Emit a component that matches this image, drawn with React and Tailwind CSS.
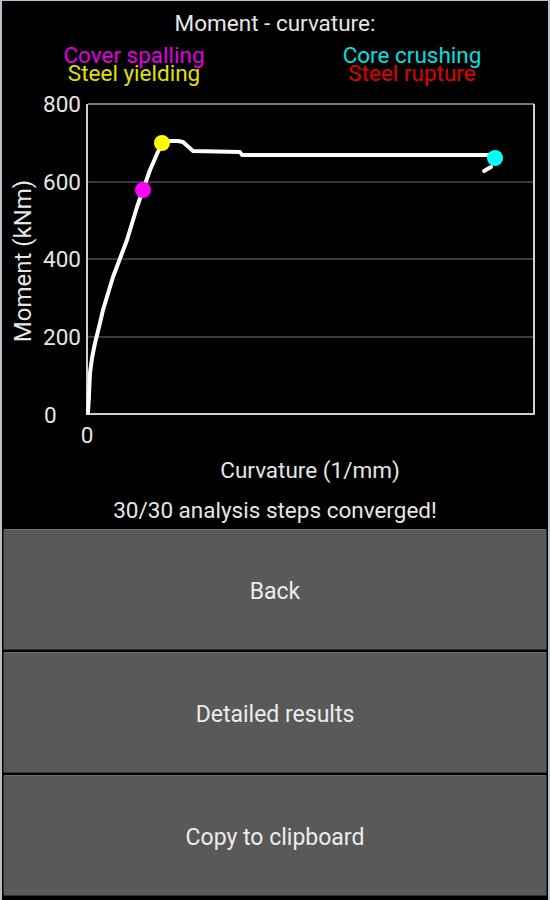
import React from "react";

const curve = [
  [88, 413], [89, 395], [90, 373], [92, 358], [95, 343], [100, 323], [103, 310],
  [113, 277], [127, 240], [137, 207], [143, 190], [150, 170], [157, 154], [162, 143],
  [170, 141], [178, 141], [183, 142], [193, 151], [240, 152], [242, 155], [490, 155],
];

const pts = curve.map(([x, y]) => `${x},${y}`).join(" ");

const Chart = () => (
  <svg width="546" height="369" viewBox="2 88 546 369" className="block">
    {/* grid */}
    {[182, 259, 337].map((y) => (
      <line key={y} x1="88" x2="533" y1={y} y2={y} stroke="#3a3a3a" strokeWidth="2" />
    ))}
    <line x1="88" x2="534" y1="104" y2="104" stroke="#777" strokeWidth="2" />
    <line x1="87" x2="87" y1="104" y2="415" stroke="#d0d0d0" strokeWidth="2" />
    <line x1="87" x2="535" y1="414" y2="414" stroke="#d0d0d0" strokeWidth="2" />
    <line x1="534" x2="534" y1="104" y2="415" stroke="#d0d0d0" strokeWidth="2" />

    {/* tick labels */}
    <g fill="#e6e6e6" fontSize="22.5" fontFamily="Roboto, sans-serif">
      <text x="43" y="112">800</text>
      <text x="43" y="190">600</text>
      <text x="43" y="267">400</text>
      <text x="43" y="345">200</text>
      <text x="44" y="423">0</text>
      <text x="87" y="443" textAnchor="middle">0</text>
      <text
        x="23"
        y="261"
        textAnchor="middle"
        dominantBaseline="central"
        fontSize="24"
        transform="rotate(-90 23 261)"
      >
        Moment (kNm)
      </text>
    </g>

    {/* curve */}
    <polyline points={pts} fill="none" stroke="#fff" strokeWidth="4" strokeLinejoin="round" strokeLinecap="round" />
    <line x1="484" y1="171" x2="491" y2="167" stroke="#fff" strokeWidth="4" strokeLinecap="round" />

    <circle cx="143" cy="190" r="8" fill="#ff00ff" />
    <circle cx="162" cy="143" r="8" fill="#ffff00" />
    <circle cx="495" cy="158" r="8" fill="#00ffff" />
  </svg>
);

const buttons = ["Back", "Detailed results", "Copy to clipboard"];

export default function App() {
  return (
    <div
      className="w-[550px] h-[900px] bg-black border-l-2 border-r-2 border-t border-[#b9c0ca] flex flex-col overflow-hidden"
      style={{ fontFamily: "Roboto, 'Noto Sans', sans-serif" }}
    >
      {/* header */}
      <div className="text-center text-[#e6e6e6] text-[22.5px] leading-[26px] mt-[9px] h-[26px]">
        Moment - curvature:
      </div>
      <div className="grid grid-cols-2 text-[22.5px] leading-[18px] mt-[10px] h-[36px] px-[1px]">
        <div className="flex flex-col items-center pr-[10px]">
          <span className="text-[#e000e0]">Cover spalling</span>
          <span className="text-[#e0e000]">Steel yielding</span>
        </div>
        <div className="flex flex-col items-center pl-[2px]">
          <span className="text-[#00e0e0]">Core crushing</span>
          <span className="text-[#e00000]">Steel rupture</span>
        </div>
      </div>

      <div className="mt-[6px] h-[369px]">
        <Chart />
      </div>

      <div className="text-center text-[#e6e6e6] text-[22.5px] leading-[26px] h-[26px] pl-[70px]">
        Curvature (1/mm)
      </div>
      <div className="text-center text-[#e6e6e6] text-[22.5px] leading-[26px] h-[26px] mt-[14px]">
        30/30 analysis steps converged!
      </div>

      {/* actions */}
      <div className="flex flex-col gap-[2px] px-[1px] mt-[6px]">
        {buttons.map((label) => (
          <button
            key={label}
            className="h-[121px] shrink-0 pt-[6px] bg-[#595959] border border-[#333] border-t-[#707070] rounded-[2px] text-[#ececec] text-[23px]"
          >
            {label}
          </button>
        ))}
      </div>
    </div>
  );
}
